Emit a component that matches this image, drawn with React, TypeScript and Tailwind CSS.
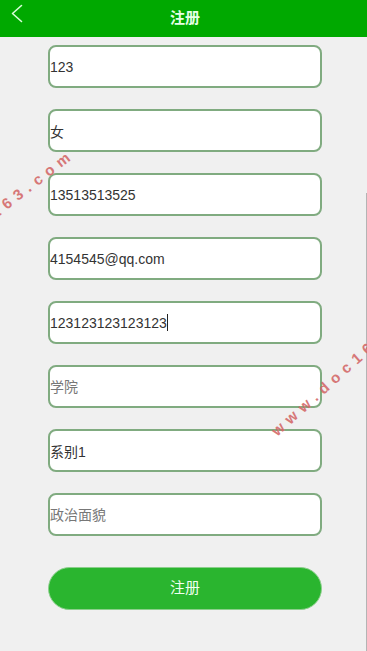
const fields = [
  { value: '123', placeholder: '用户名' },
  { value: '女', placeholder: '性别' },
  { value: '13513513525', placeholder: '手机号' },
  { value: '4154545@qq.com', placeholder: '邮箱' },
  { value: '123123123123123', placeholder: '学号', caret: true },
  { value: '', placeholder: '学院' },
  { value: '系别1', placeholder: '系别' },
  { value: '', placeholder: '政治面貌' },
]

export default function App() {
  return (
    <div
      className="relative min-h-screen overflow-hidden bg-[#f0f0f0]"
      style={{ fontFamily: '"Liberation Sans", "Noto Sans CJK SC", sans-serif' }}
    >
      <header className="relative flex h-[37px] items-center justify-center bg-[#00a900]">
        <button className="absolute left-0 top-0 h-[28px] w-[32px] text-[#d8ffd8]">
          {/* back chevron */}
          <svg width="32" height="28" viewBox="0 0 32 28" fill="none">
            <polyline points="21.5,5.5 12.5,13.5 21.5,21.5" stroke="currentColor" strokeWidth="1.6" strokeLinecap="round" strokeLinejoin="round" />
          </svg>
        </button>
        <h1 className="pl-[3px] text-[15px] font-bold text-[#e6ffe6]">注册</h1>
      </header>

      <form className="flex flex-col items-center gap-[21px] pl-[3px] pt-[8px]">
        {fields.map((f, i) => (
          <div key={i} className="relative">
            <input
              readOnly
              defaultValue={f.value}
              placeholder={f.placeholder}
              className="h-[43px] w-[274px] rounded-[8px] border-2 border-[#80ab80] bg-white px-0 text-[14px] text-[#333] outline-none placeholder:text-[#777]"
            />
            {f.caret && (
              <span className="pointer-events-none absolute left-[119px] top-[13px] h-[17px] w-px bg-[#222]" />
            )}
          </div>
        ))}

        <button
          type="button"
          className="mt-[10px] h-[43px] w-[274px] rounded-full border border-[#8ccf8c] bg-[#2ab52f] text-[15px] text-[#f0fff0]"
        >
          注册
        </button>
      </form>

      <div className="pointer-events-none absolute right-0 top-[193px] bottom-0 w-px bg-[#b4b4b4]" />

      <div className="pointer-events-none absolute left-[274px] top-[422px] origin-left -rotate-[42deg] whitespace-nowrap text-[15px] font-bold tracking-[6px] text-[#d46a6a] opacity-90">
        www.doc163.com
      </div>
      <div className="pointer-events-none absolute left-[-92px] top-[270px] origin-left -rotate-[38deg] whitespace-nowrap text-[15px] font-bold tracking-[6px] text-[#d46a6a] opacity-90">
        www.doc163.com
      </div>
    </div>
  )
}
